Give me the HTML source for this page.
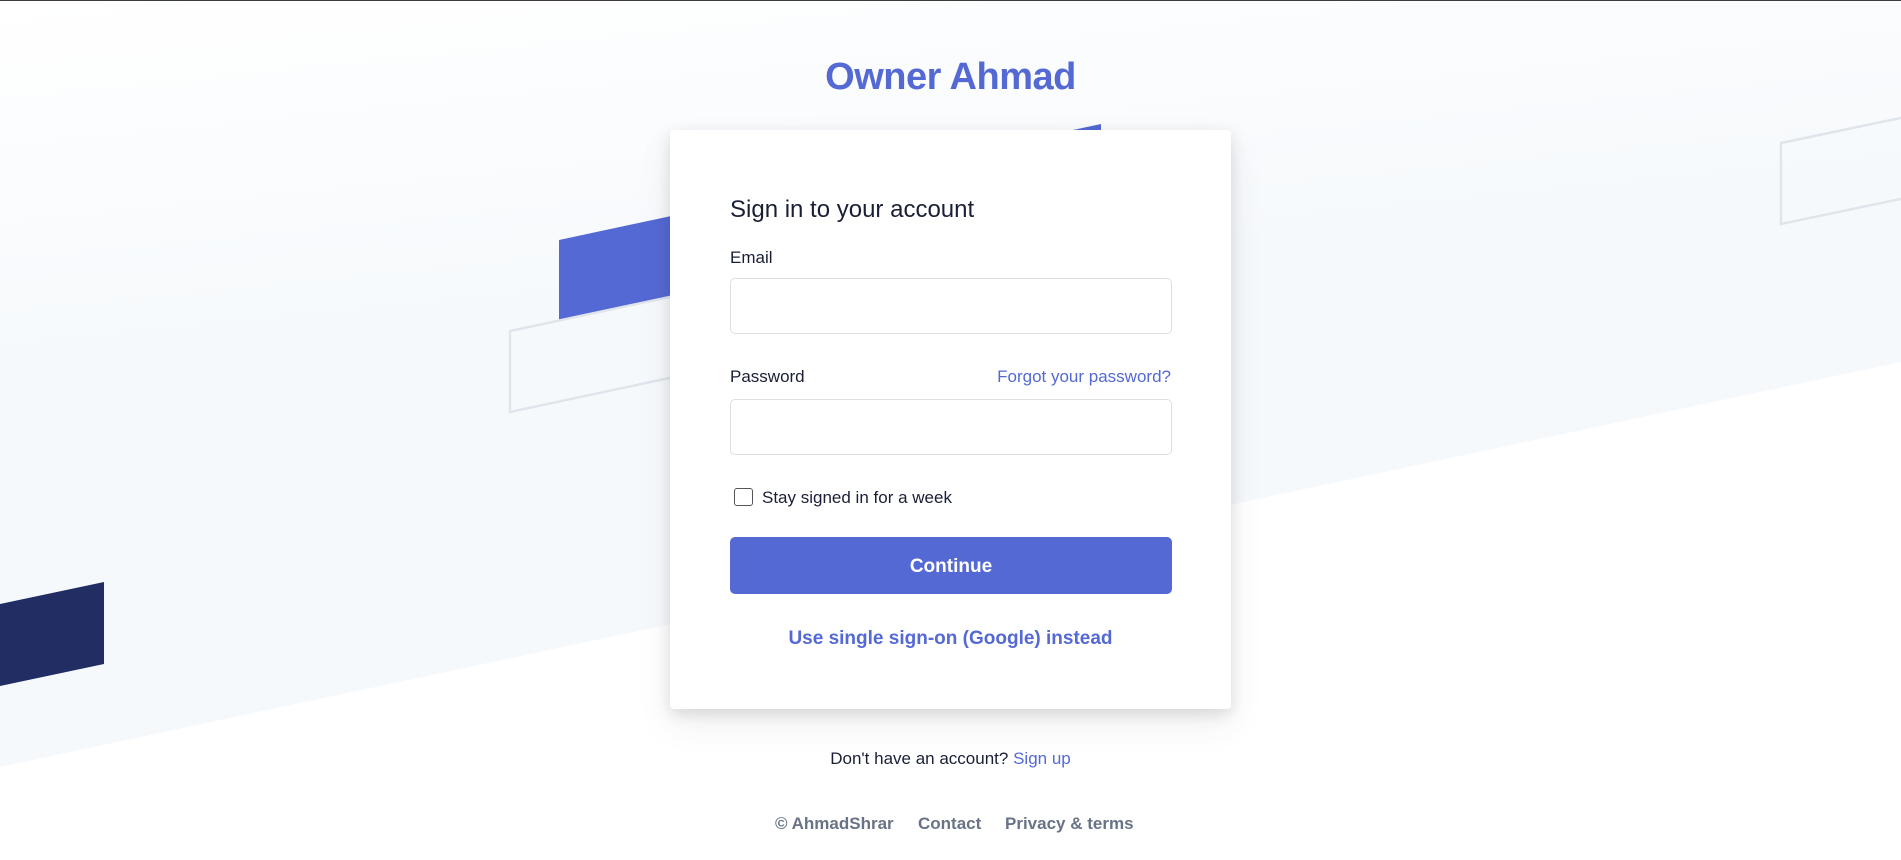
<!DOCTYPE html>
<html><head><meta charset="utf-8"><style>
*{margin:0;padding:0;box-sizing:border-box}
html,body{width:1901px;height:860px;overflow:hidden;background:#fff;font-family:"Liberation Sans",sans-serif}
.a{position:absolute}
.t{white-space:nowrap}
</style></head><body>
<div class="a" style="left:0;top:0;width:1901px;height:1px;background:#3c3c3c"></div>
<svg class="a" style="left:0;top:1px" width="1901" height="859" viewBox="0 0 1901 859">
<defs><linearGradient id="g" x1="0" y1="0" x2="0.25" y2="1"><stop offset="0" stop-color="#ffffff"/><stop offset="0.45" stop-color="#f6f9fc"/><stop offset="1" stop-color="#f6f9fc"/></linearGradient></defs>
<polygon points="0,0 1901,0 1901,361 0,766" fill="url(#g)"/>
<polygon points="559,239 1101,123 1101,204 559,320" fill="#5469d4"/>
<polygon points="510,330 1101,204 1101,285 510,411" fill="none" stroke="#e0e5ec" stroke-width="2.5"/>
<polygon points="0,603 104,581 104,663 0,685" fill="#212d63"/>
<polygon points="1781,142 1910,115 1910,196 1781,223" fill="none" stroke="#e0e5ec" stroke-width="2.5"/>
</svg>
<div class="a t" style="left:0;width:1901px;top:54px;text-align:center;font-size:38px;line-height:46px;font-weight:bold;color:#5469d4;letter-spacing:-0.5px">Owner Ahmad</div>
<div class="a" style="left:670px;top:130px;width:561px;height:579px;background:#fff;border-radius:4px;box-shadow:0 15px 35px rgba(60,66,87,.08),0 5px 15px rgba(0,0,0,.12)"></div>
<div class="a t" style="left:730px;top:196px;font-size:24px;line-height:28px;color:#1a1f36">Sign in to your account</div>
<div class="a t" style="left:730px;top:247px;font-size:17px;line-height:22px;color:#1a1f36;font-weight:500">Email</div>
<div class="a" style="left:730px;top:278px;width:442px;height:56px;border:1px solid #dcdfe4;border-radius:5px"></div>
<div class="a t" style="left:730px;top:366px;font-size:17px;line-height:22px;color:#1a1f36">Password</div>
<div class="a t" style="right:730px;top:366px;font-size:17px;line-height:22px;color:#5469d4">Forgot your password?</div>
<div class="a" style="left:730px;top:399px;width:442px;height:56px;border:1px solid #dcdfe4;border-radius:5px"></div>
<div class="a" style="left:734px;top:488px;width:19px;height:18px;border:1.5px solid #555;border-radius:3px"></div>
<div class="a t" style="left:762px;top:487px;font-size:17px;line-height:22px;color:#1a1f36">Stay signed in for a week</div>
<div class="a" style="left:730px;top:537px;width:442px;height:57px;background:#5469d4;border-radius:5px;color:#fff;font-weight:bold;font-size:19px;line-height:59px;text-align:center">Continue</div>
<div class="a t" style="left:670px;width:561px;top:627px;text-align:center;font-size:19px;line-height:24px;color:#5469d4;font-weight:bold">Use single sign-on (Google) instead</div>
<div class="a t" style="left:0;width:1901px;top:748px;text-align:center;font-size:17px;line-height:22px;color:#1a1f36">Don't have an account? <span style="color:#5469d4">Sign up</span></div>
<div class="a t" style="left:775px;top:813px;font-size:17px;line-height:22px;color:#697386;font-weight:bold">© AhmadShrar</div>
<div class="a t" style="left:918px;top:813px;font-size:17px;line-height:22px;color:#697386;font-weight:bold">Contact</div>
<div class="a t" style="left:1005px;top:813px;font-size:17px;line-height:22px;color:#697386;font-weight:bold">Privacy &amp; terms</div>
</body></html>
